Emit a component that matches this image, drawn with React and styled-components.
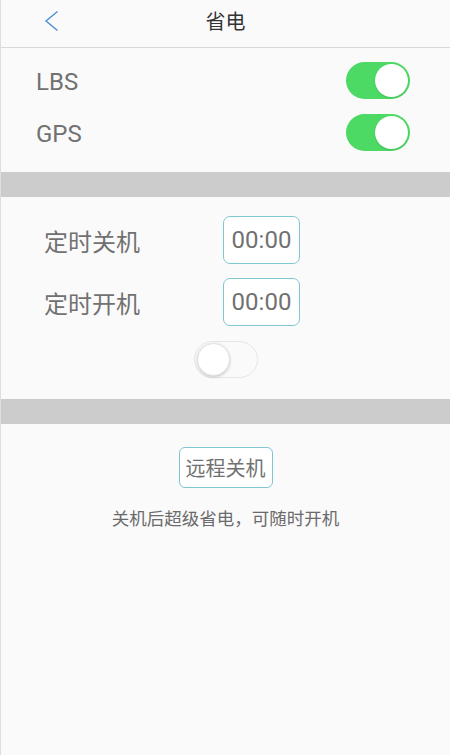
import styled, { createGlobalStyle } from "styled-components";

const GlobalStyle = createGlobalStyle`
  html, body {
    margin: 0;
    padding: 0;
    background: #fafafa;
  }
  body {
    font-family: Roboto, "Noto Sans CJK SC", sans-serif;
  }
`;

function Toggle({ on }) {
  return (
    <Track on={on}>
      <Knob on={on} />
    </Track>
  );
}

export default function App() {
  return (
    <Page>
      <GlobalStyle />
      <Header>
        <Back>
          <svg width="16" height="22" viewBox="0 0 16 22">
            <path d="M13.5 1.5 L2 11 L13.5 20.5" fill="none" stroke="#4a8fd6" strokeWidth="1.4" />
          </svg>
        </Back>
        <Title>省电</Title>
      </Header>

      <Section>
        <SwitchRow>
          <Label shift>LBS</Label>
          <Toggle on />
        </SwitchRow>
        <SwitchRow>
          <Label shift>GPS</Label>
          <Toggle on />
        </SwitchRow>
      </Section>

      <Band />

      <TimerSection>
        <TimeRow>
          <Label>定时关机</Label>
          <TimeBox>00:00</TimeBox>
        </TimeRow>
        <TimeRow>
          <Label>定时开机</Label>
          <TimeBox>00:00</TimeBox>
        </TimeRow>
        <Centered>
          <Toggle />
        </Centered>
      </TimerSection>

      <Band />

      <RemoteSection>
        <RemoteButton>远程关机</RemoteButton>
        <Hint>关机后超级省电，可随时开机</Hint>
      </RemoteSection>
    </Page>
  );
}

const Page = styled.div`
  min-height: 755px;
  background: #fafafa;
  border-left: 1px solid #dedede;
  box-sizing: border-box;
  display: flex;
  flex-direction: column;
`;

const Header = styled.div`
  height: 48px;
  box-sizing: border-box;
  border-bottom: 1px solid #d9d9d9;
  display: flex;
  align-items: center;
  justify-content: center;
  position: relative;
`;

const Back = styled.div`
  position: absolute;
  left: 43px;
  top: 10px;
  display: flex;
`;

const Title = styled.div`
  font-size: 20px;
  color: #333;
  margin-top: -6px;
`;

const Section = styled.div`
  padding: 14px 40px 22px 35px;
  display: flex;
  flex-direction: column;
  gap: 16px;
`;

const SwitchRow = styled.div`
  display: flex;
  align-items: center;
  justify-content: space-between;
  height: 36px;
`;

const Label = styled.div`
  font-size: 24px;
  color: #717171;
  padding-top: ${(p) => (p.shift ? "3px" : "0")};
`;

const Track = styled.div`
  width: 64px;
  height: 37px;
  border-radius: 19px;
  box-sizing: border-box;
  background: ${(p) => (p.on ? "#4cd964" : "#fafafa")};
  border: ${(p) => (p.on ? "none" : "1.5px solid #e6e6e6")};
  display: flex;
  align-items: center;
  justify-content: ${(p) => (p.on ? "flex-end" : "flex-start")};
  padding: 2px;
`;

const Knob = styled.div`
  width: 33px;
  height: 33px;
  border-radius: 50%;
  box-sizing: border-box;
  background: #fff;
  border: ${(p) => (p.on ? "none" : "1px solid #e2e2e2")};
  box-shadow: ${(p) =>
    p.on ? "0 1px 2px rgba(0,0,0,0.12)" : "0 1px 3px rgba(0,0,0,0.2)"};
`;

const Band = styled.div`
  height: 25px;
  background: #cccccc;
`;

const TimerSection = styled.div`
  padding: 19px 0 21px 43px;
  display: flex;
  flex-direction: column;
  gap: 14px;
`;

const TimeRow = styled.div`
  display: grid;
  grid-template-columns: 179px auto;
  align-items: center;
  justify-content: start;
`;

const TimeBox = styled.div`
  width: 77px;
  height: 48px;
  box-sizing: border-box;
  border: 1.5px solid #80c6d3;
  border-radius: 7px;
  background: #fff;
  display: flex;
  align-items: center;
  justify-content: center;
  font-size: 24px;
  color: #717171;
`;

const Centered = styled.div`
  display: flex;
  justify-content: center;
  margin-left: -43px;
  margin-top: 1px;
`;

const RemoteSection = styled.div`
  padding-top: 23px;
  display: flex;
  flex-direction: column;
  align-items: center;
`;

const RemoteButton = styled.div`
  width: 94px;
  height: 41px;
  box-sizing: border-box;
  border: 1.5px solid #80c6d3;
  border-radius: 6px;
  background: #fff;
  display: flex;
  align-items: center;
  justify-content: center;
  font-size: 20px;
  color: #717171;
`;

const Hint = styled.div`
  margin-top: 17px;
  font-size: 17.5px;
  color: #6b6b6b;
`;
